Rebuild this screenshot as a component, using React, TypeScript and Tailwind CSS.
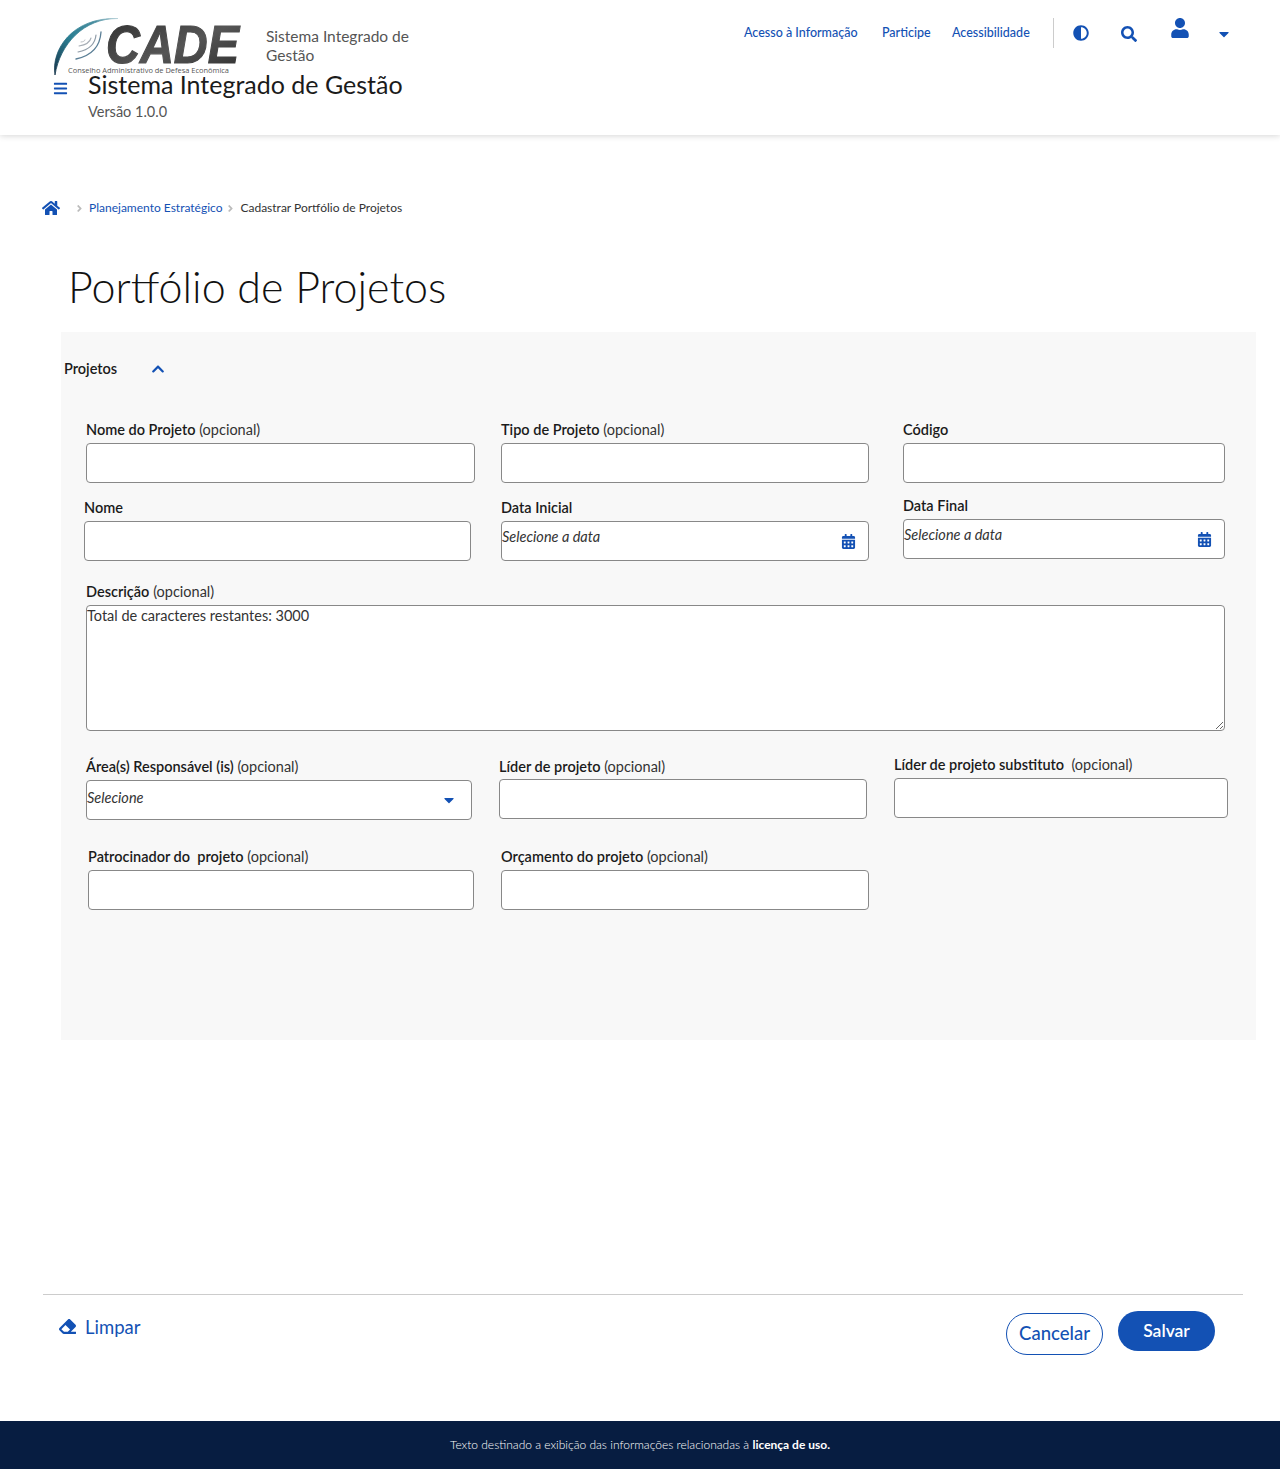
import React from "react";
import { FaAdjust, FaSearch, FaUser, FaCaretDown, FaBars, FaHome, FaChevronUp, FaCalendarAlt, FaEraser, FaAngleRight } from "react-icons/fa";

function Logo() {
  return (
    <svg width="195" height="64" viewBox="50 14 195 64" className="shrink-0">
      <defs>
        <linearGradient id="sw" x1="0" y1="1" x2="1" y2="0">
          <stop offset="0" stopColor="#16344a" />
          <stop offset="0.45" stopColor="#2b7f93" />
          <stop offset="0.8" stopColor="#4a8ea0" />
          <stop offset="1" stopColor="#b9d3da" />
        </linearGradient>
        <linearGradient id="cd" x1="0" y1="0" x2="1" y2="1">
          <stop offset="0" stopColor="#2f2f2f" />
          <stop offset="0.55" stopColor="#555555" />
          <stop offset="1" stopColor="#2e2e2e" />
        </linearGradient>
      </defs>
      <path d="M55 75 C51 50 72 17 118 18.5 C84 18 60 44 55 75 Z" fill="url(#sw)" stroke="url(#sw)" strokeWidth="0.8" />
      <g fill="none" strokeLinecap="round">
        <path d="M101 32 C100 48 90 56 76 59" stroke="#5b7f96" strokeWidth="1.3" />
        <path d="M96 35 C95 45 88 50 78 52" stroke="#8f9ca8" strokeWidth="1.2" />
        <path d="M91 38 C90 42 85 45 79 46" stroke="#a6adb5" strokeWidth="1.1" />
        <path d="M85 40 C85 41 83 42 81 42" stroke="#b8bdc2" strokeWidth="1" />
      </g>
      <text x="106" y="63" fontFamily="'Liberation Sans', sans-serif" fontWeight="700" fontStyle="italic" fontSize="54" textLength="133" lengthAdjust="spacingAndGlyphs" fill="url(#cd)" stroke="url(#cd)" strokeWidth="1.2">CADE</text>
      <text x="68" y="73" fontFamily="'Open Sans', sans-serif" fontSize="7.6" textLength="161" lengthAdjust="spacingAndGlyphs" fill="#555555">Conselho Administrativo de Defesa Econômica</text>
    </svg>
  );
}

function Label({ title, hint }: { title: string; hint?: string }) {
  return (
    <div className="h-[16px] mb-[5px] text-[14.5px] leading-[16px] text-[#1b1b1b] whitespace-pre">
      <span className="font-semibold">{title}</span>
      {hint ? <span className="text-[#333333]"> {hint}</span> : null}
    </div>
  );
}

function TextField({ title, hint, className }: { title: string; hint?: string; className: string }) {
  return (
    <div className={className}>
      <Label title={title} hint={hint} />
      <input className="block w-full h-[40px] bg-white border border-[#888888] rounded-[4px] outline-none" />
    </div>
  );
}

function DateField({ title, className }: { title: string; className: string }) {
  return (
    <div className={className}>
      <Label title={title} />
      <div className="flex h-[40px] items-center justify-between bg-white border border-[#888888] rounded-[4px] pr-[12px]">
        <span className="italic text-[14.5px] leading-[16px] text-[#333333] mb-[9px]">Selecione a data</span>
        <FaCalendarAlt className="text-[#1351b4] text-[15px]" />
      </div>
    </div>
  );
}

export default function App() {
  return (
    <div className="min-h-[1469px] flex flex-col bg-white font-['Lato','Open_Sans',sans-serif] text-[#1b1b1b]">
      <header className="h-[135px] shrink-0 bg-white shadow-[0_1px_6px_rgba(0,0,0,0.16)] pl-[50px]">
        <div className="flex h-[69px] pt-[14px]">
          <Logo />
          <div className="ml-[21px] mt-[13px] w-[160px] text-[15.5px] leading-[19px] text-[#555555]">Sistema Integrado de Gestão</div>
          <nav className="flex h-[32px] mt-[3px] items-center ml-auto mr-[51px] text-[#1351b4]">
            <a className="text-[12.5px] font-medium w-[115px] whitespace-nowrap">Acesso à Informação</a>
            <a className="ml-[23px] text-[12.5px] font-medium w-[49px] whitespace-nowrap">Participe</a>
            <a className="ml-[21px] text-[12.5px] font-medium w-[80px] whitespace-nowrap">Acessibilidade</a>
            <span className="ml-[21px] w-px h-[30px] bg-[#cccccc]" />
            <FaAdjust className="ml-[19px] text-[16px]" />
            <FaSearch className="ml-[32px] text-[16px] mt-[2px]" />
            <FaUser className="ml-[33px] text-[20px] mb-[11px]" />
            <FaCaretDown className="ml-[29px] text-[16px] mt-[2px] w-[10px]" />
          </nav>
        </div>
        <div className="flex">
          <FaBars className="ml-[3px] mt-[12px] text-[#1351b4] text-[15px]" />
          <div className="ml-[20px]">
            <div className="text-[25px] leading-[30px] text-[#1b1b1b]">Sistema Integrado de Gestão</div>
            <div className="text-[14.5px] leading-[18px] mt-[4px] text-[#555555]">Versão 1.0.0</div>
          </div>
        </div>
      </header>

      <main className="flex-1 flex flex-col">
        <div className="flex items-center h-[20px] mt-[63px] ml-[42px] text-[12px]">
          <FaHome className="text-[#1351b4] text-[18px]" />
          <FaAngleRight className="ml-[14px] text-[#bbbbbb] text-[11px]" />
          <a className="ml-[4px] text-[#1351b4]">Planejamento Estratégico</a>
          <FaAngleRight className="ml-[3px] text-[#bbbbbb] text-[11px]" />
          <span className="ml-[4px] text-[#333333]">Cadastrar Portfólio de Projetos</span>
        </div>

        <h1 className="ml-[68px] mt-[43px] text-[43px] leading-[52px] font-light text-[#111111]">Portfólio de Projetos</h1>

        <section className="mt-[19px] ml-[61px] mr-[24px] h-[708px] bg-[#f8f8f8] pt-[29px]">
          <div className="flex items-center h-[16px] ml-[3px]">
            <span className="text-[14.5px] font-semibold">Projetos</span>
            <FaChevronUp className="ml-[34px] text-[#1351b4] text-[14px]" />
          </div>

          <div className="flex items-start mt-[45px]">
            <TextField title="Nome do Projeto" hint="(opcional)" className="ml-[25px] w-[389px]" />
            <TextField title="Tipo de Projeto" hint="(opcional)" className="ml-[26px] w-[368px]" />
            <TextField title="Código" className="ml-[34px] w-[322px]" />
          </div>

          <div className="flex items-start mt-[17px]">
            <TextField title="Nome" className="ml-[23px] w-[387px]" />
            <DateField title="Data Inicial" className="ml-[30px] w-[368px]" />
            <DateField title="Data Final" className="ml-[34px] w-[322px] -mt-[2px]" />
          </div>

          <div className="ml-[25px] w-[1139px] mt-[23px]">
            <Label title="Descrição" hint="(opcional)" />
            <textarea
              className="block w-full h-[126px] bg-white border border-[#888888] rounded-[4px] text-[14.5px] leading-[20px] text-[#333333] outline-none"
              defaultValue="Total de caracteres restantes: 3000"
            />
          </div>

          <div className="flex items-start mt-[28px]">
            <div className="ml-[25px] w-[386px]">
              <Label title="Área(s) Responsável (is)" hint="(opcional)" />
              <div className="flex h-[40px] items-center justify-between bg-white border border-[#888888] rounded-[4px] pr-[14px]">
                <span className="italic text-[14.5px] leading-[16px] text-[#333333] mb-[5px]">Selecione</span>
                <FaCaretDown className="text-[#1351b4] text-[16px]" />
              </div>
            </div>
            <div className="ml-[27px] w-[368px]">
              <Label title="Líder de projeto" hint="(opcional)" />
              <input className="block w-full h-[40px] -mt-[1px] bg-white border border-[#888888] rounded-[4px] outline-none" />
            </div>
            <TextField title="Líder de projeto substituto " hint="(opcional)" className="ml-[27px] w-[334px] -mt-[2px]" />
          </div>

          <div className="flex items-start mt-[29px]">
            <div className="ml-[27px] w-[386px]">
              <Label title="Patrocinador do  projeto" hint="(opcional)" />
              <input className="block w-full h-[40px] mt-[1px] bg-white border border-[#888888] rounded-[4px] outline-none" />
            </div>
            <TextField title="Orçamento do projeto" hint="(opcional)" className="ml-[27px] w-[368px]" />
          </div>
        </section>

        <div className="mt-[254px] mx-[43px] w-[1200px] border-t border-[#cccccc]" />

        <div className="flex items-start mt-[16px] ml-[59px] mr-[65px]">
          <a className="flex items-center h-[34px] text-[#1351b4] text-[18.5px]">
            <FaEraser className="text-[17px] mb-[3px]" />
            <span className="ml-[9px]">Limpar</span>
          </a>
          <button className="ml-auto mt-[2px] w-[97px] h-[42px] rounded-full border border-[#1351b4] bg-white text-[#1351b4] text-[18.5px] font-medium">Cancelar</button>
          <button className="ml-[15px] w-[97px] h-[40px] rounded-full bg-[#1351b4] text-white text-[17.5px] font-semibold">Salvar</button>
        </div>
      </main>

      <footer className="h-[48px] shrink-0 flex items-center justify-center bg-[#071d41] text-white text-[12px]">
        <span className="font-light">Texto destinado a exibição das informações relacionadas à <strong className="font-bold">licença de uso.</strong></span>
      </footer>
    </div>
  );
}
